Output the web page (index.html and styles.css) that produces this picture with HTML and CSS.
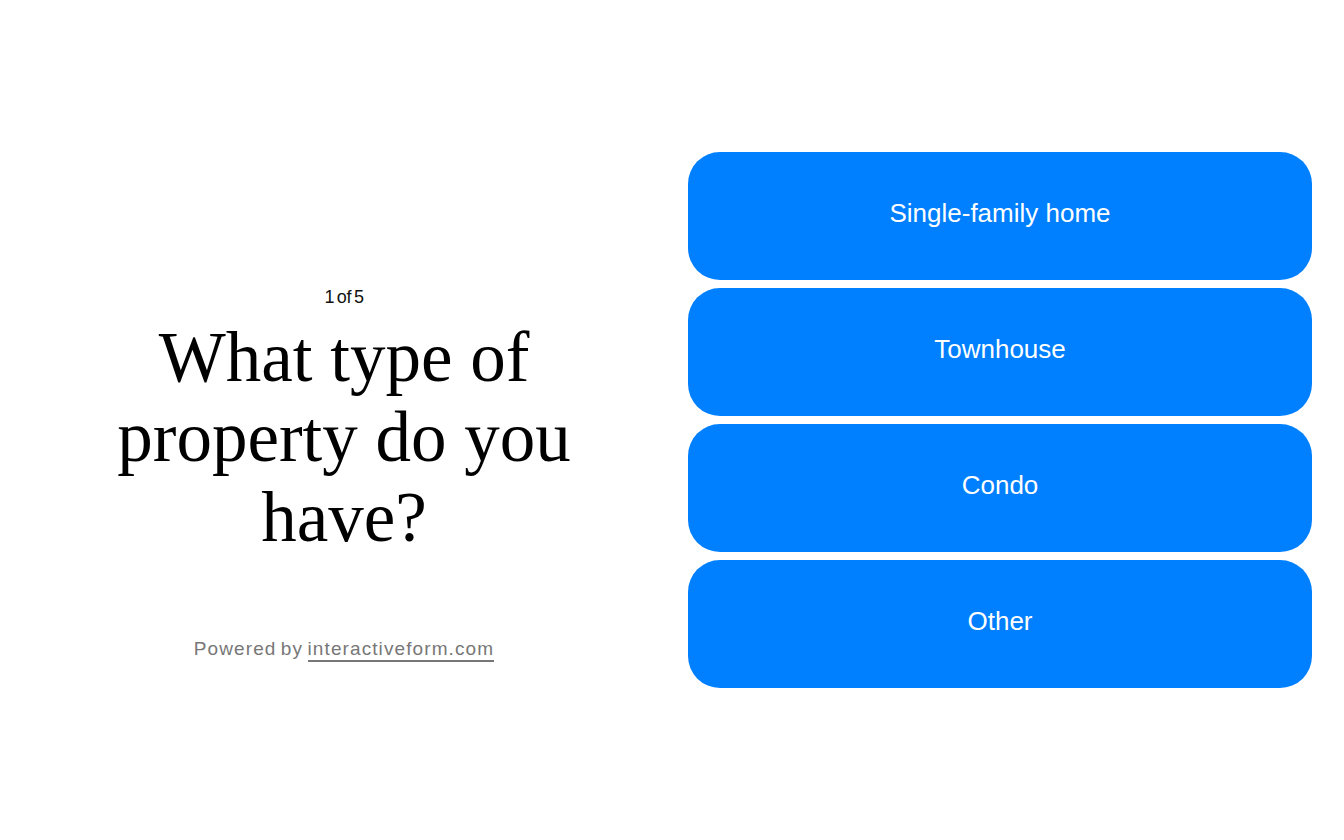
FILE: index.html
```html
<!DOCTYPE html>
<html lang="en">
<head>
    <meta charset="UTF-8">
    <meta name="viewport" content="width=device-width, initial-scale=1.0">
    <title>What type of property do you have?</title>
    <link rel="stylesheet" href="styles.css">
</head>
<body>

<div class="page">
    <div class="question">
        <div class="step">1 of 5</div>
        <h1>What type of property do you have?</h1>
        <div class="powered">Powered by <a href="#">interactiveform.com</a></div>
    </div>

    <div class="choices">
        <button class="choice">Single-family home</button>
        <button class="choice">Townhouse</button>
        <button class="choice">Condo</button>
        <button class="choice">Other</button>
    </div>
</div>

</body>
</html>
```

FILE: styles.css
```css
body {
    margin: 0;
    background: white;
    font-family: "Liberation Sans", Arial, sans-serif;
}

.page {
    height: 840px;
    box-sizing: border-box;
    padding: 0 32px;
    display: grid;
    grid-template-columns: 1fr 1fr;
    gap: 32px;
    align-items: center;
}

.question {
    display: flex;
    flex-direction: column;
    align-items: center;
    text-align: center;
    padding-top: 106px;
}

.step {
    font-size: 18px;
    line-height: 21px;
    letter-spacing: -0.3px;
    word-spacing: -2px;
    color: #111;
}

h1 {
    font-family: "Liberation Serif", "Times New Roman", serif;
    font-weight: normal;
    font-size: 71px;
    line-height: 80px;
    margin: 9px 0 0;
    color: black;
}

.powered {
    margin-top: 81px;
    font-size: 19px;
    letter-spacing: 1.1px;
    word-spacing: -2px;
    color: #777;
}

.powered a {
    color: #777;
    text-decoration: none;
    border-bottom: 2px solid #777;
    padding-bottom: 1px;
}

.choices {
    display: flex;
    flex-direction: column;
    gap: 8px;
}

.choice {
    height: 128px;
    padding: 0 0 6px;
    border: none;
    border-radius: 32px;
    background: #007fff;
    color: white;
    font-family: "Liberation Sans", Arial, sans-serif;
    font-size: 26px;
    cursor: pointer;
}

.choice:hover {
    background: #0070e6;
}
```
